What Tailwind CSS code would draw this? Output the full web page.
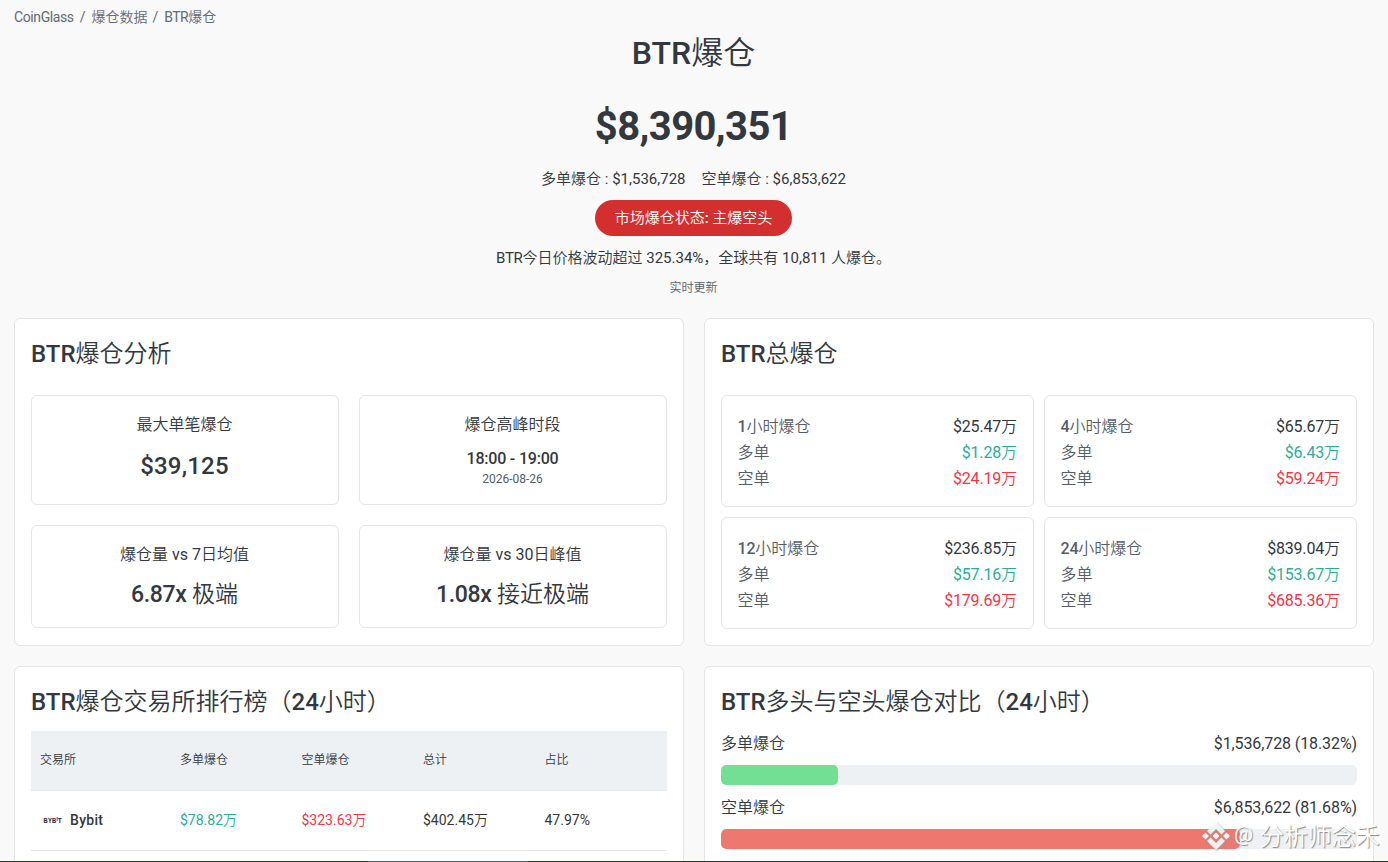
<!DOCTYPE html>
<html lang="zh-CN">
<head>
  <meta charset="UTF-8">
  <meta name="viewport" content="width=device-width, initial-scale=1.0">
  <title>BTR爆仓</title>
  <script src="https://cdn.jsdelivr.net/npm/@tailwindcss/browser@4"></script>
  <style>
    body { font-family: Roboto, 'Noto Sans CJK SC', sans-serif; }
    .cn { font-family: 'Noto Sans CJK SC DemiLight', 'Noto Sans CJK SC', sans-serif; font-weight: 350; letter-spacing: 0; line-height: 1; }
  </style>
</head>
<body class="bg-[#f9f9f9] text-[#32383e] h-[862px] overflow-hidden relative">

  <!-- Breadcrumb -->
  <nav class="h-[34px] pl-[14px] flex items-baseline gap-[6px] text-sm leading-[34px] text-[#636b74]">
    <span class="tracking-[-0.4px]">CoinGlass</span>
    <span>/</span>
    <span class="cn">爆仓数据</span>
    <span class="-ml-px">/</span>
    <span><span class="tracking-[-0.5px]">BTR</span><span class="cn">爆仓</span></span>
  </nav>

  <!-- Summary -->
  <header class="h-[284px] pr-px text-center flex flex-col items-center">
    <h1 class="h-[40px] text-[32px] leading-[39px] font-medium whitespace-nowrap">BTR<span class="cn">爆仓</span></h1>
    <div class="mt-[22px] h-[60px] text-[40px] leading-[62px] font-bold tracking-[-0.6px]">$8,390,351</div>
    <div class="mt-[10px] h-[26px] leading-[26px] text-[15px] flex gap-4">
      <div><span class="cn">多单爆仓</span> : $1,536,728</div>
      <div><span class="cn">空单爆仓</span> : $6,853,622</div>
    </div>
    <div class="mt-2 h-9 w-[197px] rounded-full bg-[#d32f2f] text-white text-[15px] leading-[37px] font-medium"><span class="cn font-medium!">市场爆仓状态</span>: <span class="cn font-medium!">主爆空头</span></div>
    <p class="mt-[9px] h-[26px] leading-[26px] text-[15px] whitespace-nowrap"><span class="tracking-[-0.3px]">BTR</span><span class="cn">今日价格波动超过</span> 325.34%<span class="cn">，全球共有</span> 10,811 <span class="cn">人爆仓。</span></p>
    <p class="mt-[6px] h-5 leading-[22px] text-xs text-[#555e68]"><span class="cn">实时更新</span></p>
  </header>

  <main class="px-[14px] grid grid-cols-2 gap-5 h-[544px] overflow-hidden">
    <section class="h-[328px] bg-white border border-[#e3e5e8] rounded-md px-4">
      <h2 class="h-[76px] leading-[70px] text-2xl font-medium">BTR<span class="cn">爆仓分析</span></h2>
      <div class="grid grid-cols-2 gap-5 text-center">
        <div class="h-[110px] border border-[#e3e5e8] rounded-md pt-4 pr-px">
          <div class="leading-[26px]"><span class="cn">最大单笔爆仓</span></div>
          <div class="mt-2 text-2xl leading-[40px] font-medium tracking-[0.2px]">$39,125</div>
        </div>
        <div class="h-[110px] border border-[#e3e5e8] rounded-md pt-4 pr-px">
          <div class="leading-[26px]"><span class="cn">爆仓高峰时段</span></div>
          <div class="mt-[9px] leading-6 font-medium tracking-[-0.2px]">18:00 - 19:00</div>
          <div class="text-xs leading-4 text-[#555e68]">2026-08-26</div>
        </div>
        <div class="h-[103px] border border-[#e3e5e8] rounded-md pt-4 pr-px">
          <div class="leading-[26px]"><span class="cn">爆仓量</span> vs 7<span class="cn">日均值</span></div>
          <div class="mt-2 text-[23px] leading-[38px] font-medium tracking-[-0.3px]">6.87x <span class="cn">极端</span></div>
        </div>
        <div class="h-[103px] border border-[#e3e5e8] rounded-md pt-4 pr-px">
          <div class="leading-[26px]"><span class="cn">爆仓量</span> vs 30<span class="cn">日峰值</span></div>
          <div class="mt-2 text-[23px] leading-[38px] font-medium tracking-[-0.3px]">1.08x <span class="cn">接近极端</span></div>
        </div>
      </div>
    </section>

    <section class="h-[328px] bg-white border border-[#e3e5e8] rounded-md px-4">
      <h2 class="h-[76px] leading-[70px] text-2xl font-medium">BTR<span class="cn">总爆仓</span></h2>
      <div class="grid grid-cols-2 gap-[10px] leading-[26px] tracking-[-0.2px]">
        <div class="h-[112px] border border-[#e3e5e8] rounded-md pl-[15.5px] pr-4 pt-[18px]">
          <div class="flex items-baseline justify-between"><span class="text-[#555e68] font-medium">1<span class="cn">小时爆仓</span></span><span>$25.47<span class="cn">万</span></span></div>
          <div class="flex items-baseline justify-between"><span class="cn text-[#555e68]">多单</span><span class="text-[#2bae96]">$1.28<span class="cn">万</span></span></div>
          <div class="flex items-baseline justify-between"><span class="cn text-[#555e68]">空单</span><span class="text-[#f23645]">$24.19<span class="cn">万</span></span></div>
        </div>
        <div class="h-[112px] border border-[#e3e5e8] rounded-md pl-[15.5px] pr-4 pt-[18px]">
          <div class="flex items-baseline justify-between"><span class="text-[#555e68] font-medium">4<span class="cn">小时爆仓</span></span><span>$65.67<span class="cn">万</span></span></div>
          <div class="flex items-baseline justify-between"><span class="cn text-[#555e68]">多单</span><span class="text-[#2bae96]">$6.43<span class="cn">万</span></span></div>
          <div class="flex items-baseline justify-between"><span class="cn text-[#555e68]">空单</span><span class="text-[#f23645]">$59.24<span class="cn">万</span></span></div>
        </div>
        <div class="h-[112px] border border-[#e3e5e8] rounded-md pl-[15.5px] pr-4 pt-[18px]">
          <div class="flex items-baseline justify-between"><span class="text-[#555e68] font-medium">12<span class="cn">小时爆仓</span></span><span>$236.85<span class="cn">万</span></span></div>
          <div class="flex items-baseline justify-between"><span class="cn text-[#555e68]">多单</span><span class="text-[#2bae96]">$57.16<span class="cn">万</span></span></div>
          <div class="flex items-baseline justify-between"><span class="cn text-[#555e68]">空单</span><span class="text-[#f23645]">$179.69<span class="cn">万</span></span></div>
        </div>
        <div class="h-[112px] border border-[#e3e5e8] rounded-md pl-[15.5px] pr-4 pt-[18px]">
          <div class="flex items-baseline justify-between"><span class="text-[#555e68] font-medium">24<span class="cn">小时爆仓</span></span><span>$839.04<span class="cn">万</span></span></div>
          <div class="flex items-baseline justify-between"><span class="cn text-[#555e68]">多单</span><span class="text-[#2bae96]">$153.67<span class="cn">万</span></span></div>
          <div class="flex items-baseline justify-between"><span class="cn text-[#555e68]">空单</span><span class="text-[#f23645]">$685.36<span class="cn">万</span></span></div>
        </div>
      </div>
    </section>

    <section class="h-[328px] bg-white border border-[#e3e5e8] rounded-md px-4">
      <h2 class="h-[64px] leading-[70px] text-2xl font-medium">BTR<span class="cn">爆仓交易所排行榜（</span>24<span class="cn">小时）</span></h2>
      <div class="grid grid-cols-[140px_121.5px_121.5px_121.5px_1fr] items-center h-[60px] pl-[9px] pb-1 bg-[#edf1f4] border-b border-[#e3e5e8] text-xs cn">
        <span>交易所</span><span>多单爆仓</span><span>空单爆仓</span><span>总计</span><span>占比</span>
      </div>
      <div class="grid grid-cols-[140px_121.5px_121.5px_121.5px_1fr] h-[60px] leading-[59px] pl-[9px] border-b border-[#e3e5e8] text-sm">
        <span class="flex items-center h-[58px] leading-[58px] font-medium tracking-[0.3px]">
          <svg class="ml-[3px] mr-[7px]" width="20" height="20" viewBox="0 0 20 20" font-family="Liberation Sans" font-weight="700" font-size="6.5">
            <text x="0.5" y="12.5" textLength="13" lengthAdjust="spacingAndGlyphs" fill="#15192a">BYB</text>
            <rect x="13.6" y="7" width="1.2" height="4" fill="#ef454a"/>
            <text x="14.8" y="12.5" fill="#15192a">T</text>
          </svg>
          Bybit
        </span>
        <span class="text-[#2bae96]">$78.82<span class="cn">万</span></span>
        <span class="text-[#f23645]">$323.63<span class="cn">万</span></span>
        <span>$402.45<span class="cn">万</span></span>
        <span>47.97%</span>
      </div>
    </section>

    <section class="h-[328px] bg-white border border-[#e3e5e8] rounded-md px-4">
      <h2 class="h-[64px] leading-[70px] text-2xl font-medium">BTR<span class="cn">多头与空头爆仓对比（</span>24<span class="cn">小时）</span></h2>
      <div class="h-[34px] flex items-baseline justify-between leading-[26px]"><span class="cn">多单爆仓</span><span class="tracking-[-0.1px]">$1,536,728 (18.32%)</span></div>
      <div class="h-5 rounded-[5px] bg-[#edf1f4] overflow-hidden"><div class="h-5 rounded-[5px] bg-[#73df95]" style="width:18.32%"></div></div>
      <div class="mt-[10px] h-[34px] flex items-baseline justify-between leading-[26px]"><span class="cn">空单爆仓</span><span class="tracking-[-0.1px]">$6,853,622 (81.68%)</span></div>
      <div class="h-5 rounded-[5px] bg-[#edf1f4] overflow-hidden"><div class="h-5 rounded-[5px] bg-[#ed786f]" style="width:81.68%"></div></div>
    </section>
  </main>

  <!-- Watermark -->
  <div class="absolute left-[1201px] top-[820px] h-8 flex items-center whitespace-nowrap text-white text-2xl leading-8 [text-shadow:1px_1px_1px_#888]">
    <svg class="drop-shadow-[1px_1px_1px_#999]" width="30" height="30" viewBox="0 0 30 30" fill="#fff" fill-opacity="0.85">
      <path d="M15 1l9 9-3.5 3.5L15 8l-5.5 5.5L6 10zM4.5 11.5L8 15l-3.5 3.5L1 15zM25.5 11.5L29 15l-3.5 3.5L22 15zM15 11.5l3.5 3.5-3.5 3.5-3.5-3.5zM6 20l3.500-3.5L15 22l5.5-5.5L24 20l-9 9z"/>
    </svg>
    <span class="ml-[3px] -mt-1 text-[21px]">@</span>
    <span class="cn ml-[7px] -mt-[2px]">分析师念禾</span>
  </div>

  <!-- Bottom edge -->
  <div class="absolute left-0 bottom-0 w-full h-px bg-[#263e2b] flex"><div class="ml-[368px] w-[160px] bg-[#555e68]"></div></div>
</body>
</html>
